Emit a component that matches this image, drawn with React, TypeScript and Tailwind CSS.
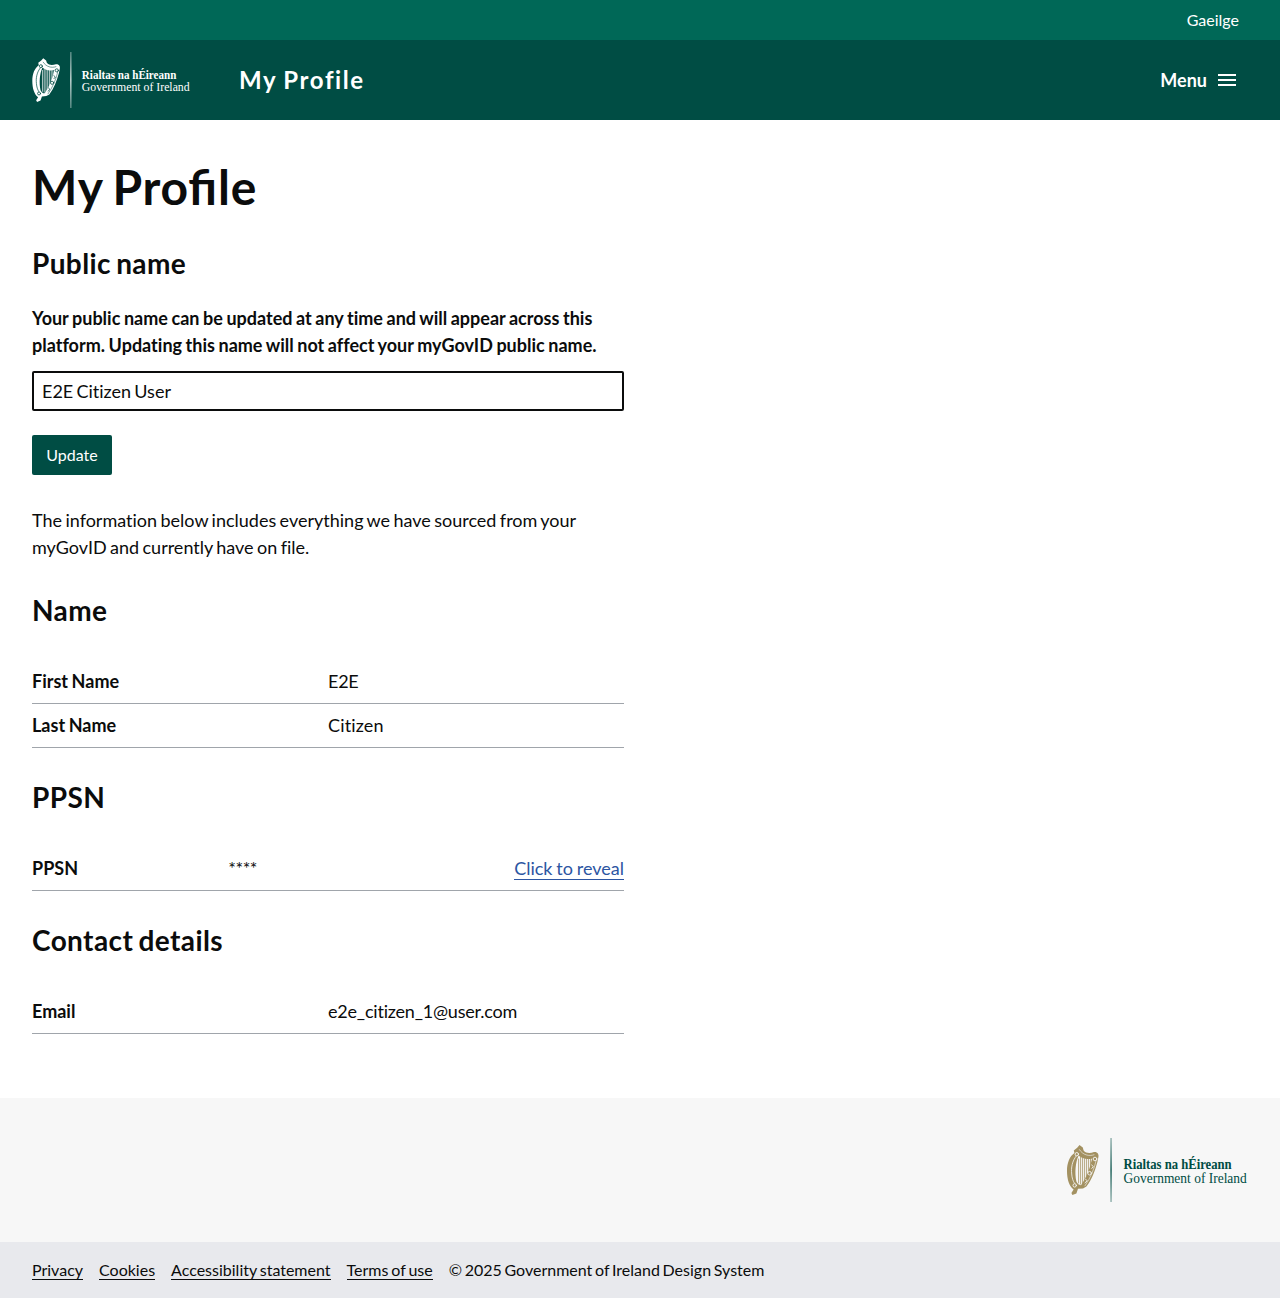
import React from 'react';

type LogoProps = { id: string; harp: string; text: string; bg: string; className: string };

function GovLogo({ id, harp, text, bg, className }: LogoProps) {
  return (
    <svg viewBox="0 0 181 64" className={className} role="img" aria-label="Government of Ireland">
      <defs>
        <linearGradient id={id} x1="0" y1="0" x2="0" y2="1">
          <stop offset="0" stopColor={text} stopOpacity="0.45" />
          <stop offset="0.5" stopColor={text} />
          <stop offset="1" stopColor={text} stopOpacity="0.45" />
        </linearGradient>
      </defs>
      <g fill="none" stroke={harp} strokeLinecap="round" strokeLinejoin="round">
        <path
          fill={harp}
          stroke="none"
          d="M12.5 7 L15.8 9.6 L16.6 12.4 C19 15.4 23 15.4 27 14 C30.6 13.6 32 16.4 31.4 19 L30.4 24 C28 33 24.6 42 19.4 48.6 L16 50.4 L11 50.8 L9.4 55.4 L5.4 57 L4.4 55 L6.6 51.6 C2 48 0 41 0 33 C0 25 2.6 18.4 7.4 15 L6.8 12.4 L10.2 9.8 Z"
        />
        <path
          fill={bg}
          stroke="none"
          d="M11.6 17.6 C15 21 20 21.8 26 20.4 C24.4 28 21 37.8 16 46.6 C13.4 48 10.8 46.8 9.4 43.6 C7.6 35 8.4 24.6 11.6 17.6 Z"
        />
        <path stroke={bg} strokeWidth="0.8" d="M9.6 17.6 C5 23 4 30 4.7 36 C5 40 6 43 7.4 45.2" />
        <path stroke={bg} strokeWidth="0.6" d="M12.4 11.6 C15.8 17 22 18.6 27 16.8 M29.4 21.4 C27.4 31 23.4 40 18 47.8" />
        <path strokeWidth="0.8" d="M11.6 21 V45 M13.6 19.4 V46 M15.6 20 V45.5 M17.6 20.6 V42 M19.6 20.6 V38 M21.6 20.4 V34 M23.5 20 V29" />
        <path strokeWidth="2" d="M26 21 C24 31 20.4 40 15 47.6" />
        <g fill={harp} stroke={bg} strokeWidth="0.9">
          <circle cx="9.8" cy="16.2" r="1.7" />
          <circle cx="28" cy="21" r="1.8" />
          <circle cx="22.6" cy="35.2" r="1.8" />
          <circle cx="7.7" cy="47.4" r="1.7" />
          <path d="M24.6 27 L26.4 28.6 L24.8 30.4 M18.4 41 L20.2 42.8 L18 44.8" />
        </g>
      </g>
      <rect x="43.4" y="0" width="1.3" height="64" fill={`url(#${id})`} />
      <g fill={text} fontFamily="'Liberation Serif', serif">
        <text x="56.6" y="30.6" fontSize="13.6" fontWeight="700" textLength="108" lengthAdjust="spacingAndGlyphs">
          Rialtas na hÉireann
        </text>
        <text x="56.6" y="44.5" fontSize="14.4" textLength="123.2" lengthAdjust="spacingAndGlyphs">
          Government of Ireland
        </text>
      </g>
    </svg>
  );
}

function Row({ label, value, valueClass = '' }: { label: string; value: string; valueClass?: string }) {
  return (
    <div className="grid h-11 grid-cols-2 items-center border-b border-[#a0a5ab]">
      <dt className="font-bold">{label}</dt>
      <dd className={valueClass}>{value}</dd>
    </div>
  );
}

function Heading({ children }: { children: React.ReactNode }) {
  return (
    <h2 className="text-[28px] leading-[35px] font-bold tracking-[0.4px] [word-spacing:-2px]">{children}</h2>
  );
}

const footerLinks = ['Privacy', 'Cookies', 'Accessibility statement', 'Terms of use'];

export default function App() {
  return (
    <div className="bg-white text-lg leading-[27px] text-[#0b0c0c] [font-family:Lato,sans-serif] [font-variant-ligatures:none] [word-spacing:-0.8px]">
      <header className="text-white">
        <div className="flex h-10 items-center justify-end bg-[#006857] pr-[41px] text-base">
          <a href="#">Gaeilge</a>
        </div>
        <div className="flex h-20 items-center bg-[#004d44] pr-[41px] pl-8">
          <GovLogo id="header-rule" harp="#ffffff" text="#ffffff" bg="#004d44" className="h-14 w-[159px] overflow-visible [word-spacing:0]" />
          <span className="ml-12 text-2xl font-bold tracking-[1.6px]">My Profile</span>
          <button className="ml-auto flex items-center gap-2 font-bold">
            Menu
            <svg viewBox="0 0 24 24" className="h-6 w-6" fill="currentColor">
              <path d="M3 18h18v-2H3v2zm0-5h18v-2H3v2zm0-7v2h18V6H3z" />
            </svg>
          </button>
        </div>
      </header>

      <main className="h-[978px] px-8 pt-[37px]">
        <div className="w-[592px]">
          <h1 className="text-5xl leading-[60px] font-bold tracking-[0.8px] [font-feature-settings:'liga'_1] [font-variant-ligatures:normal] [word-spacing:-2.6px]">
            My Profile
          </h1>
          <div className="mt-[29px]">
            <Heading>Public name</Heading>
          </div>
          <label htmlFor="public-name" className="mt-6 block font-bold">
            Your public name can be updated at any time and will appear across this platform. Updating this name will not
            affect your myGovID public name.
          </label>
          <input
            id="public-name"
            defaultValue="E2E Citizen User"
            className="mt-3 block h-10 w-full rounded-xs border-2 border-[#0b0c0c] px-2 [word-spacing:-1.4px]"
          />
          <button className="mt-6 block h-10 w-20 rounded-xs bg-[#004d44] text-base text-white">Update</button>
          <p className="mt-8 [word-spacing:-1.2px]">
            The information below includes everything we have sourced from your myGovID and currently have on file.
          </p>
          <div className="mt-8">
            <Heading>Name</Heading>
          </div>
          <dl className="mt-8">
            <Row label="First Name" value="E2E" valueClass="tracking-[-0.25px]" />
            <Row label="Last Name" value="Citizen" valueClass="tracking-[0.15px]" />
          </dl>
          <div className="mt-8">
            <Heading>PPSN</Heading>
          </div>
          <dl className="mt-8 grid h-11 grid-cols-3 items-center border-b border-[#a0a5ab]">
            <dt className="font-bold">PPSN</dt>
            <dd className="-ml-px tracking-[-0.5px]">****</dd>
            <dd className="text-right">
              <a href="#" className="inline-block border-b border-[#2c55a2] leading-[22px] text-[#2c55a2]">
                Click to reveal
              </a>
            </dd>
          </dl>
          <div className="mt-8">
            <Heading>Contact details</Heading>
          </div>
          <dl className="mt-8">
            <Row label="Email" value="e2e_citizen_1@user.com" valueClass="tracking-[-0.2px]" />
          </dl>
        </div>
      </main>

      <footer>
        <div className="flex h-36 items-center justify-end bg-[#f7f7f7] pr-8">
          <GovLogo id="footer-rule" harp="#a39161" text="#004d44" bg="#f7f7f7" className="h-16 w-[181px] overflow-visible [word-spacing:0]" />
        </div>
        <div className="flex h-14 items-center gap-4 bg-[#e8e9ed] px-8 text-base [word-spacing:-1.2px]">
          {footerLinks.map((label) => (
            <a key={label} href="#" className="border-b border-[#0b0c0c] leading-[19px]">
              {label}
            </a>
          ))}
          <span className="[word-spacing:-1.4px]">© 2025 Government of Ireland Design System</span>
        </div>
      </footer>
    </div>
  );
}
